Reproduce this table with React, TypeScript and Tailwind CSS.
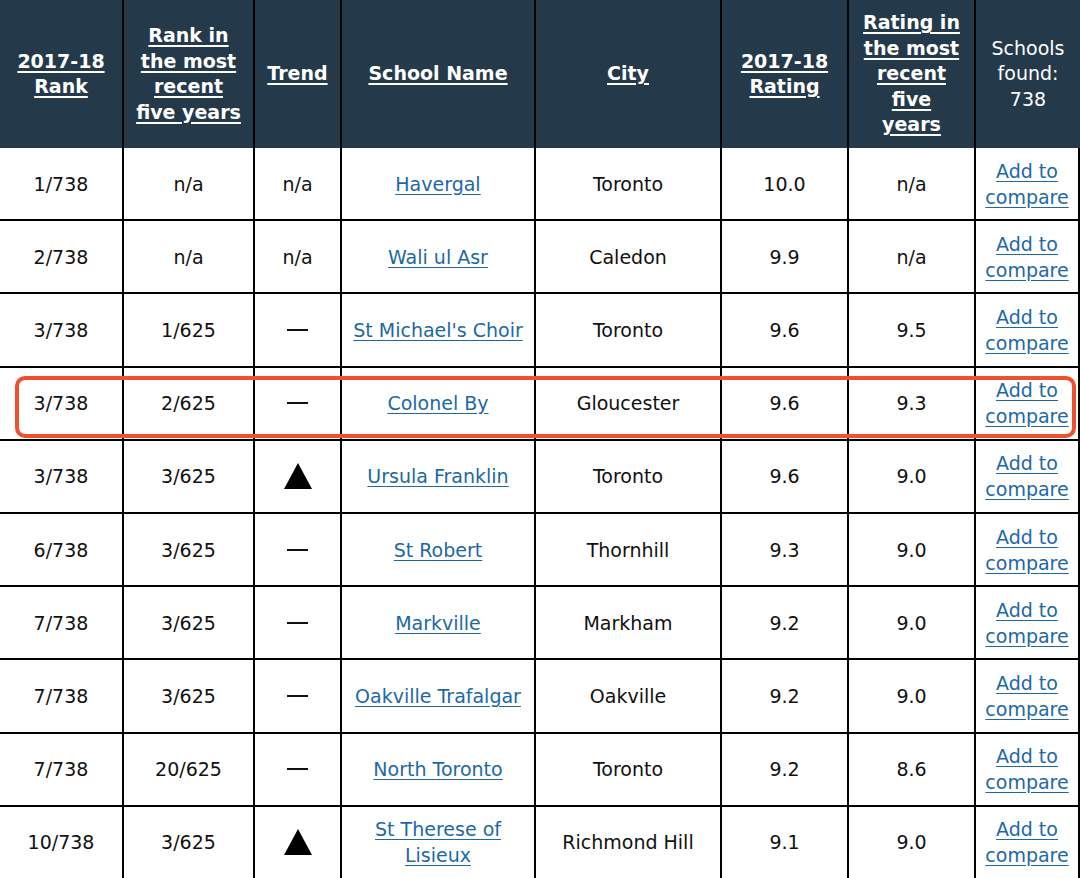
import React from 'react';

type Row = {
  rank: string;
  recent: string;
  trend: 'na' | 'flat' | 'up';
  school: string[];
  city: string;
  rating: string;
  recentRating: string;
};

const rows: Row[] = [
  { rank: '1/738', recent: 'n/a', trend: 'na', school: ['Havergal'], city: 'Toronto', rating: '10.0', recentRating: 'n/a' },
  { rank: '2/738', recent: 'n/a', trend: 'na', school: ['Wali ul Asr'], city: 'Caledon', rating: '9.9', recentRating: 'n/a' },
  { rank: '3/738', recent: '1/625', trend: 'flat', school: ["St Michael's Choir"], city: 'Toronto', rating: '9.6', recentRating: '9.5' },
  { rank: '3/738', recent: '2/625', trend: 'flat', school: ['Colonel By'], city: 'Gloucester', rating: '9.6', recentRating: '9.3' },
  { rank: '3/738', recent: '3/625', trend: 'up', school: ['Ursula Franklin'], city: 'Toronto', rating: '9.6', recentRating: '9.0' },
  { rank: '6/738', recent: '3/625', trend: 'flat', school: ['St Robert'], city: 'Thornhill', rating: '9.3', recentRating: '9.0' },
  { rank: '7/738', recent: '3/625', trend: 'flat', school: ['Markville'], city: 'Markham', rating: '9.2', recentRating: '9.0' },
  { rank: '7/738', recent: '3/625', trend: 'flat', school: ['Oakville Trafalgar'], city: 'Oakville', rating: '9.2', recentRating: '9.0' },
  { rank: '7/738', recent: '20/625', trend: 'flat', school: ['North Toronto'], city: 'Toronto', rating: '9.2', recentRating: '8.6' },
  { rank: '10/738', recent: '3/625', trend: 'up', school: ['St Therese of', 'Lisieux'], city: 'Richmond Hill', rating: '9.1', recentRating: '9.0' },
];

const cols = 'grid grid-cols-[124px_131px_87px_194px_186px_127px_127px_104px]';
const head = 'flex items-center justify-center text-center border-r-2 border-black h-[148px] leading-[25.5px] font-bold underline underline-offset-[3px] decoration-[2px]';
const cell = 'flex items-center justify-center text-center border-r-2 border-b-2 border-black h-[73.2px] leading-[26px]';

function Triangle() {
  return (
    <svg width="28" height="26" viewBox="0 0 28 26">
      <path d="M14 0 L28 26 L0 26 Z" fill="#000" />
    </svg>
  );
}

function Trend({ t }: { t: Row['trend'] }) {
  if (t === 'na') return <span>n/a</span>;
  if (t === 'up') return <Triangle />;
  return <span className="block w-[21px] h-[2px] bg-[#111]" />;
}

export default function App() {
  return (
    <div
      className="relative w-[1080px] h-[878px] overflow-hidden bg-white text-[19px] text-[#111]"
      style={{ fontFamily: '"DejaVu Sans", Verdana, sans-serif' }}
    >
      <div className={`${cols} bg-[#243a4b] text-white`}>
        <div className={head}>2017-18<br />Rank</div>
        <div className={head}>Rank in<br />the most<br />recent<br />five years</div>
        <div className={head}>Trend</div>
        <div className={head}>School Name</div>
        <div className={head}>City</div>
        <div className={head}>2017-18<br />Rating</div>
        <div className={head}>Rating in<br />the most<br />recent<br />five<br />years</div>
        <div className="flex items-center justify-center text-center h-[148px] leading-[25.5px]">Schools<br />found:<br />738</div>
      </div>
      {rows.map((r, i) => (
        <div key={i} className={cols}>
          <div className={cell}>{r.rank}</div>
          <div className={cell}>{r.recent}</div>
          <div className={cell}><Trend t={r.trend} /></div>
          <div className={`${cell} text-[#1d68a6] underline underline-offset-[3px]`}>
            <span>
              {r.school.map((s, j) => (
                <React.Fragment key={j}>
                  {j > 0 && <br />}
                  {s}
                </React.Fragment>
              ))}
            </span>
          </div>
          <div className={cell}>{r.city}</div>
          <div className={cell}>{r.rating}</div>
          <div className={cell}>{r.recentRating}</div>
          <div className={`${cell} border-r-0 text-[#1d68a6] underline underline-offset-[3px]`}>Add to<br />compare</div>
        </div>
      ))}
      <div className="absolute left-[15px] top-[376px] w-[1061px] h-[62px] rounded-[10px] border-4 border-[#f0502e]" />
    </div>
  );
}
